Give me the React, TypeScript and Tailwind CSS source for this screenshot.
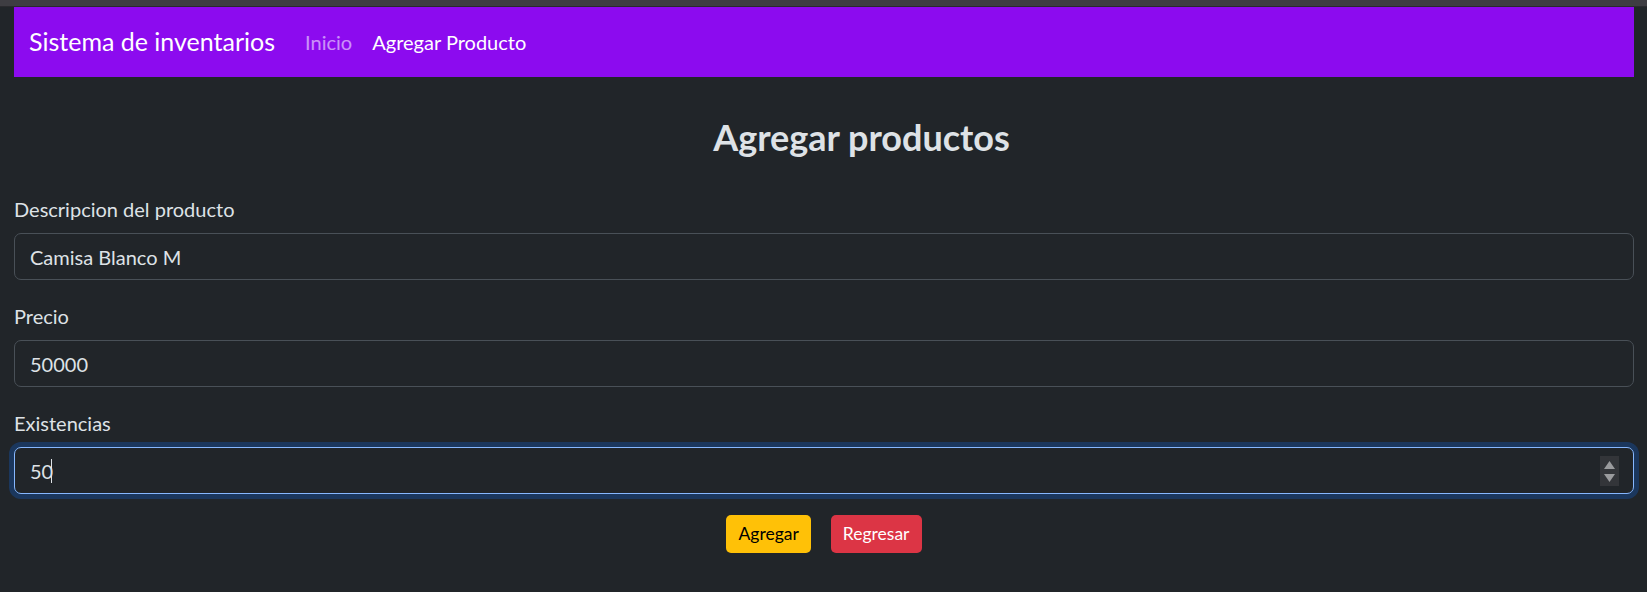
import React from "react";

const font = "font-['Segoe_UI',Lato,'Noto_Sans',sans-serif]";

function Field({ label, value, focused = false }: { label: string; value: string; focused?: boolean }) {
  return (
    <div className="mb-[21px]">
      <label className="block text-[20px] leading-[30px] mb-[9px]">{label}</label>
      <div className="relative">
        <input
          readOnly
          value={value}
          className={
            focused
              ? "block w-full h-[47px] rounded-[7px] border border-[#86b7fe] bg-[#212529] px-[15px] text-[20px] text-[#dee2e6] outline-none shadow-[0_0_0_5px_rgba(13,110,253,0.25)]"
              : "block w-full h-[47px] rounded-[7px] border border-[#495057] bg-[#212529] px-[15px] text-[20px] text-[#dee2e6] outline-none"
          }
        />
        {focused && (
          <>
            {/* caret */}
            <span className="absolute left-[37px] top-[12px] h-[24px] w-px bg-[#dee2e6]" />
            {/* number spinner */}
            <span className="absolute right-[15px] top-[9px] flex h-[30px] w-[19px] flex-col items-center justify-center gap-[5px] bg-[#333539]">
              <svg width="11" height="8" viewBox="0 0 11 8">
                <path d="M5.5 0 L11 8 L0 8 Z" fill="#9a9b9d" />
              </svg>
              <svg width="11" height="8" viewBox="0 0 11 8">
                <path d="M0 0 L11 0 L5.5 8 Z" fill="#9a9b9d" />
              </svg>
            </span>
          </>
        )}
      </div>
    </div>
  );
}

export default function App() {
  return (
    <div className={`min-h-screen bg-[#212529] text-[#dee2e6] ${font}`}>
      {/* browser strip */}
      <div className="h-[7px] bg-[#3e3d42] border-b border-[#2a2a2e]" />

      <div className="pl-[14px] pr-[13px]">
        {/* Navbar */}
        <nav className="flex h-[70px] items-center bg-[#8c0bef] px-[15px]">
          <span className="mr-[20px] text-[25px] text-white">Sistema de inventarios</span>
          <a className="px-[10px] text-[20px] text-white/55">Inicio</a>
          <a className="px-[10px] text-[20px] text-white">Agregar Producto</a>
        </nav>

        {/* Title */}
        <h3 className="mt-[39px] mb-[36px] flex justify-center pl-[75px] text-[36px] font-bold leading-[42px]">
          Agregar productos
        </h3>

        <form>
          <Field label="Descripcion del producto" value="Camisa Blanco M" />
          <Field label="Precio" value="50000" />
          <Field label="Existencias" value="50" focused />

          <div className="flex justify-center gap-[20px]">
            <button
              type="button"
              className="h-[38px] rounded-[5px] bg-[#ffc107] px-[12px] text-[17.5px] text-black"
            >
              Agregar
            </button>
            <button
              type="button"
              className="h-[38px] rounded-[5px] bg-[#dc3545] px-[12px] text-[17.5px] text-white"
            >
              Regresar
            </button>
          </div>
        </form>
      </div>
    </div>
  );
}
